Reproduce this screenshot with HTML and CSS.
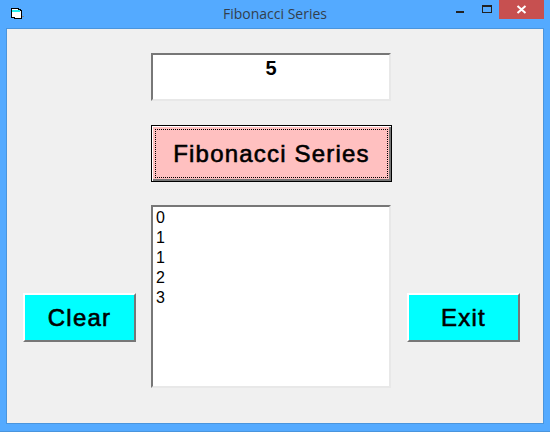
FILE: index.html
```html
<!DOCTYPE html>
<html lang="en">
<head>
    <meta charset="UTF-8">
    <meta name="viewport" content="width=device-width, initial-scale=1.0">
    <title>Fibonacci Series</title>
    <link rel="stylesheet" href="styles.css">
</head>
<body>
    <div class="window">
        <div class="titlebar">
            <svg class="app-icon" width="13" height="12" viewBox="0 0 13 12" shape-rendering="crispEdges">
                <path d="M0.5 0.5h7v1h2v1h1v8h-7v-1h-3z" fill="#fff" stroke="#000"/>
                <path d="M1 2h8v2H1z" fill="#2ee"/>
                <path d="M11 8h2v1h-2z" fill="#888"/>
            </svg>
            <div class="title">Fibonacci Series</div>
            <div class="controls">
                <div class="btn-min"></div>
                <div class="btn-max"></div>
                <div class="btn-close">
                    <svg width="11" height="9" viewBox="0 0 11 9">
                        <path d="M1.5 1l8 7M9.5 1l-8 7" stroke="#fff" stroke-width="2" fill="none"/>
                    </svg>
                </div>
            </div>
        </div>
        <div class="client">
            <div class="side">
                <button class="cmd">Clear</button>
            </div>
            <div class="center">
                <div class="textbox">5</div>
                <button class="main-btn"><span class="focus">Fibonacci Series</span></button>
                <ul class="list">
                    <li>0</li>
                    <li>1</li>
                    <li>1</li>
                    <li>2</li>
                    <li>3</li>
                </ul>
            </div>
            <div class="side">
                <button class="cmd">Exit</button>
            </div>
        </div>
    </div>
</body>
</html>
```

FILE: styles.css
```css
html, body {
    margin: 0;
    padding: 0;
}
body {
    width: 550px;
    height: 432px;
    overflow: hidden;
    font-family: "Liberation Sans", Arial, sans-serif;
}
.window {
    width: 550px;
    height: 432px;
    box-sizing: border-box;
    padding: 0 6px 7px;
    background: #54aaff;
    border-bottom: 1px solid #4a95dd;
    display: flex;
    flex-direction: column;
}
.titlebar {
    height: 28px;
    flex: none;
    position: relative;
    display: flex;
    align-items: center;
    justify-content: center;
}
.app-icon {
    position: absolute;
    left: 5px;
    top: 8px;
}
.title {
    font-family: "Open Sans", sans-serif;
    font-size: 14px;
    color: #333f4d;
    margin-top: -1px;
}
.controls {
    position: absolute;
    top: 0;
    right: 0;
    display: flex;
}
.btn-min {
    width: 8px;
    height: 2px;
    margin: 11px 18px 0 0;
    background: #222;
}
.btn-max {
    width: 10px;
    height: 8px;
    box-sizing: border-box;
    margin: 5px 7px 0 0;
    border: 1px solid #222;
    border-top-width: 2px;
}
.btn-close {
    width: 45px;
    height: 19px;
    background: #c75050;
    display: flex;
    align-items: center;
    justify-content: center;
}
.client {
    flex: 1;
    box-sizing: border-box;
    border: 1px solid #4a95dd;
    background: #f0f0f0;
    display: grid;
    grid-template-columns: 113px 241px 113px;
    column-gap: 15px;
    padding: 24px 0 0 16px;
}
.side {
    display: flex;
    align-items: flex-end;
    padding-bottom: 81px;
}
.cmd {
    width: 113px;
    height: 49px;
    padding: 0;
    background: #00ffff;
    border: 2px solid;
    border-color: #fff #777 #777 #fff;
    font-family: "Liberation Sans", Arial, sans-serif;
    font-size: 24px;
    letter-spacing: 1.2px;
    -webkit-text-stroke: 0.6px #000;
    color: #000;
}
.center {
    display: flex;
    flex-direction: column;
}
.textbox {
    width: 240px;
    height: 48px;
    box-sizing: border-box;
    background: #fff;
    border: 2px solid;
    border-color: #777 #e8e8e8 #e8e8e8 #777;
    text-align: center;
    font-size: 20px;
    font-weight: bold;
    line-height: 26px;
    color: #000;
}
.main-btn {
    width: 241px;
    height: 57px;
    margin-top: 24px;
    padding: 3px;
    background: #ffc0c0;
    border: 1px solid #000;
    box-shadow: inset 1px 1px 0 #fff, inset -2px -2px 0 #777;
    font-family: "Liberation Sans", Arial, sans-serif;
    font-size: 24px;
    letter-spacing: 1.2px;
    -webkit-text-stroke: 0.6px #000;
    color: #000;
}
.focus {
    display: flex;
    align-items: center;
    justify-content: center;
    height: 100%;
    box-sizing: border-box;
    border: 1px dotted #000;
}
.list {
    width: 240px;
    height: 183px;
    box-sizing: border-box;
    margin: 23px 0 0;
    padding: 1px 3px;
    list-style: none;
    background: #fff;
    border: 2px solid;
    border-color: #777 #e8e8e8 #e8e8e8 #777;
    font-size: 16px;
    line-height: 20px;
    color: #000;
}
```
